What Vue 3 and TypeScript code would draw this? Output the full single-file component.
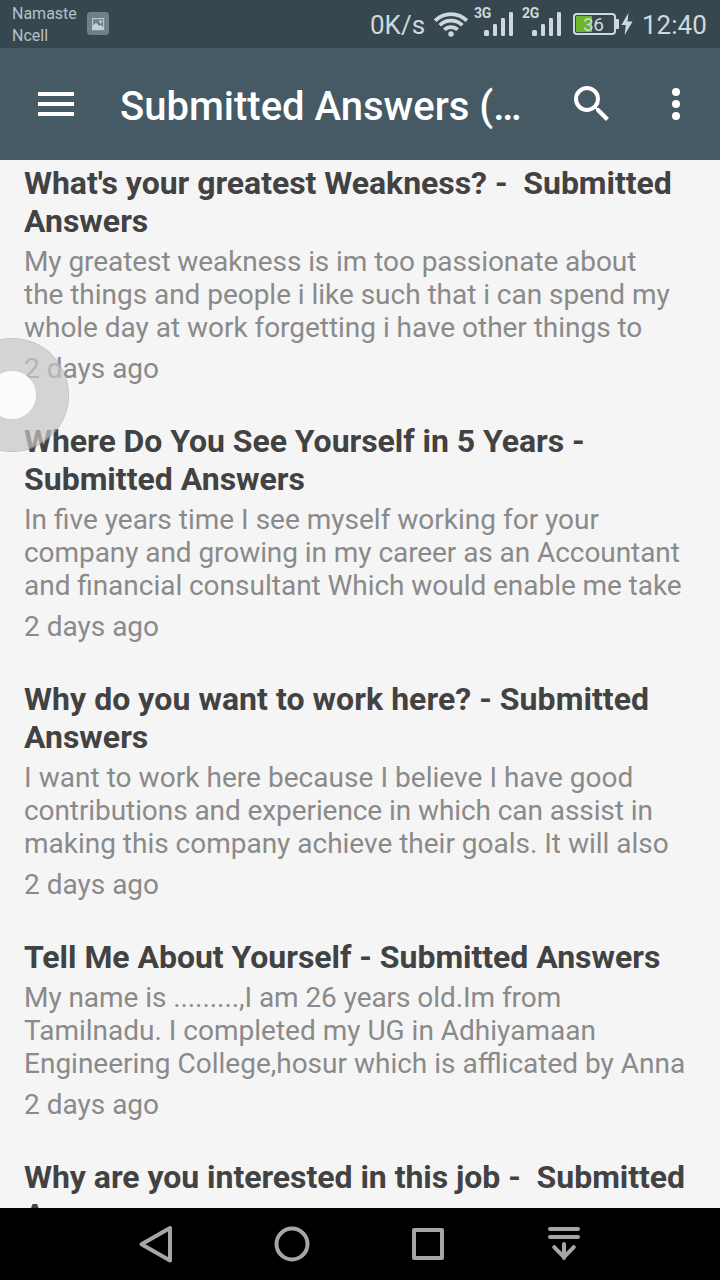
<script setup lang="ts">
interface Line { text: string; tracking?: number; wordGap?: number }
interface Answer { title: Line[]; body: Line[]; time?: string }

const answers: Answer[] = [
  {
    title: [{ text: "What's your greatest Weakness? -  Submitted", tracking: -0.035 }, { text: 'Answers' }],
    body: [
      { text: 'My greatest weakness is im too passionate about', tracking: -0.075 },
      { text: 'the things and people i like such that i can spend my', tracking: -0.035 },
      { text: 'whole day at work forgetting i have other things to', tracking: -0.03 },
    ],
    time: '2 days ago',
  },
  {
    title: [{ text: 'Where Do You See Yourself in 5 Years -', tracking: -0.045 }, { text: 'Submitted Answers' }],
    body: [
      { text: 'In five years time I see myself working for your' },
      { text: 'company and growing in my career as an Accountant', tracking: -0.065 },
      { text: 'and financial consultant Which would enable me take', wordGap: -0.3 },
    ],
    time: '2 days ago',
  },
  {
    title: [{ text: 'Why do you want to work here? - Submitted', tracking: 0.05 }, { text: 'Answers' }],
    body: [
      { text: 'I want to work here because I believe I have good', tracking: 0.04 },
      { text: 'contributions and experience in which can assist in', tracking: -0.08 },
      { text: 'making this company achieve their goals. It will also', tracking: -0.01 },
    ],
    time: '2 days ago',
  },
  {
    title: [{ text: 'Tell Me About Yourself - Submitted Answers', tracking: -0.035 }],
    body: [
      { text: 'My name is .........,I am 26 years old.Im from', tracking: -0.065 },
      { text: 'Tamilnadu. I completed my UG in Adhiyamaan' },
      { text: 'Engineering College,hosur which is afflicated by Anna' },
    ],
    time: '2 days ago',
  },
  {
    title: [{ text: 'Why are you interested in this job -  Submitted', tracking: -0.04 }, { text: 'Answers' }],
    body: [],
  },
]

const spacing = (l: Line) => ({
  letterSpacing: l.tracking ? `${l.tracking}px` : undefined,
  wordSpacing: l.wordGap ? `${l.wordGap}px` : undefined,
})
</script>

<template>
  <div class="screen">
    <header class="status">
      <div class="carrier"><span>Namaste</span><span>Ncell</span></div>
      <svg class="pic" width="22" height="23" viewBox="0 0 22 23">
        <rect width="22" height="23" rx="3.5" fill="#708087" />
        <path d="M5.6 6.6h11v11h-11z" fill="none" stroke="#b9c4c9" stroke-width="1.2" />
        <path d="M5.5 17.5v-3.6l3.6-3.2 3 3 1.5-.6 3 2.4v2z" fill="#c7d1d5" />
        <path d="M13.6 8v3.4M11.9 9.7h3.4" stroke="#c7d1d5" stroke-width="1.2" />
      </svg>
      <span class="speed">0K/s</span>
      <svg class="wifi" width="36" height="28" viewBox="433 10 36 28" fill="none" stroke="#cfd8dc" stroke-width="3.7">
        <path d="M435.1 20.6a22.6 22.6 0 0 1 31.8 0" />
        <path d="M439.7 25.3a16 16 0 0 1 22.6 0" />
        <path d="M444.4 29.8a9.4 9.4 0 0 1 13.2 0" />
        <circle cx="451" cy="34" r="2.7" fill="#cfd8dc" stroke="none" />
      </svg>
      <div v-for="net in ['3G', '2G']" :key="net" class="signal">
        <span>{{ net }}</span>
        <svg width="30" height="26" viewBox="0 0 30 26" fill="#cfd8dc">
          <rect x="0" y="19" width="5" height="6" rx="1.5" />
          <rect x="9" y="13" width="4" height="12" rx="1.2" />
          <rect x="17" y="7" width="4" height="18" rx="1.2" />
          <rect x="25" y="1" width="4" height="24" rx="1.2" />
        </svg>
      </div>
      <div class="battery"><i></i><b>36</b></div>
      <svg class="bolt" width="12" height="24" viewBox="0 0 12 24"><path d="M7.4 1L.4 13h4.4L3.6 23 11.6 9.6H6.6z" fill="#cfd8dc" /></svg>
      <span class="clock">12:40</span>
    </header>

    <div class="toolbar">
      <svg class="menu" width="36" height="24" viewBox="0 0 36 24" fill="#fff"><path d="M0 0h36v4H0zM0 10h36v4H0zM0 20h36v4H0z" /></svg>
      <h1>Submitted Answers (…</h1>
      <svg class="search" width="48" height="48" viewBox="0 0 24 24" fill="#fff">
        <path d="M15.5 14h-.79l-.28-.27A6.47 6.47 0 0 0 16 9.5 6.5 6.5 0 1 0 9.5 16c1.61 0 3.09-.59 4.23-1.57l.27.28v.79l5 4.99L20.49 19zm-6 0a4.5 4.5 0 1 1 0-9 4.5 4.5 0 0 1 0 9z" />
      </svg>
      <svg class="more" width="8" height="32" viewBox="0 0 8 32" fill="#fff"><circle cx="4" cy="4" r="4" /><circle cx="4" cy="16" r="4" /><circle cx="4" cy="28" r="4" /></svg>
    </div>

    <main class="list">
      <article v-for="(a, i) in answers" :key="i">
        <h2><span v-for="l in a.title" :key="l.text" :style="spacing(l)">{{ l.text }}</span></h2>
        <p v-if="a.body.length"><span v-for="l in a.body" :key="l.text" :style="spacing(l)">{{ l.text }}</span></p>
        <time v-if="a.time">{{ a.time }}</time>
      </article>
    </main>

    <nav class="nav">
      <svg width="40" height="40" viewBox="0 0 40 40"><path d="M5.5 20.3L34 4v32.5z" /></svg>
      <svg width="40" height="40" viewBox="0 0 40 40"><circle cx="20" cy="20" r="15.5" /></svg>
      <svg width="40" height="40" viewBox="0 0 40 40"><rect x="6" y="6" width="28" height="28" /></svg>
      <svg width="40" height="40" viewBox="0 0 40 40"><path d="M6 5h28M6 13h28M20 20v14M10.2 23.2L20 33.2l9.800-10" /></svg>
    </nav>

    <div class="bubble"></div>
  </div>
</template>

<style scoped>
.screen { position: relative; width: 720px; height: 1280px; overflow: hidden; display: flex; flex-direction: column; background: #f5f5f5; font-family: Roboto, sans-serif; }
.status { height: 48px; flex: none; display: flex; align-items: flex-start; background: #37474f; color: #cfd8dc; }
.carrier { width: 87px; flex: none; padding: 3px 0 0 12px; box-sizing: border-box; font-size: 16px; line-height: 22px; color: #b6c0c5; }
.carrier span { display: block; }
.pic { margin-top: 12px; flex: none; }
.speed { width: 63px; margin-left: 261px; flex: none; font-size: 26px; line-height: 50px; }
.wifi { flex: none; margin-top: 10px; }
.signal { position: relative; width: 30px; height: 26px; flex: none; margin: 11px 0 0 15px; }
.signal + .signal { margin-left: 18px; }
.signal svg { display: block; }
.signal span { position: absolute; left: -10px; top: -5px; font-size: 14px; line-height: 14px; font-weight: 700; letter-spacing: -0.4px; }
.battery { position: relative; width: 43px; height: 22px; box-sizing: border-box; flex: none; margin: 13px 0 0 11px; border: 2px solid #cfd8dc; border-radius: 4px; display: flex; }
.battery::after { content: ""; position: absolute; left: 41px; top: 4px; width: 3px; height: 10px; background: #cfd8dc; border-radius: 0 1px 1px 0; }
.battery i { width: 16px; height: 16px; margin: 1px; background: #6cb52d; }
.battery b { position: absolute; left: 8px; top: 0; font-weight: 400; font-size: 19px; line-height: 19px; letter-spacing: -0.5px; }
.bolt { flex: none; margin: 12px 0 0 5px; }
.clock { margin-left: 9px; font-size: 26px; line-height: 50px; }
.toolbar { height: 112px; flex: none; display: flex; align-items: flex-start; background: #455a64; color: #fff; padding-left: 38px; }
.menu { margin-top: 44px; flex: none; }
h1 { width: 448px; margin: 0 0 0 46px; flex: none; font-size: 40px; font-weight: 500; line-height: 117px; white-space: pre; }
.search { flex: none; margin-top: 32px; }
.more { flex: none; margin: 40px 0 0 56px; }
.list { flex: 1; min-height: 0; overflow: hidden; padding: 4px 24px 0; }
article { margin-bottom: 37px; }
h2 { margin: 0; font-size: 32px; line-height: 38px; font-weight: 700; color: #424242; }
p { margin: 5px 0 0; font-size: 28px; line-height: 33px; color: #8a8a8a; }
h2 span, p span { display: block; white-space: pre; }
time { display: block; margin-top: 8px; font-size: 28px; line-height: 33px; color: #8a8a8a; }
.nav { height: 72px; flex: none; display: flex; gap: 96px; padding: 16px 0 0 136px; box-sizing: border-box; background: #000; }
.nav svg { flex: none; fill: none; stroke: #a6a6a6; stroke-width: 4; stroke-linecap: round; stroke-linejoin: round; }
.bubble { position: absolute; left: -45px; top: 338px; width: 114px; height: 114px; box-sizing: border-box; border: 1px solid rgba(160, 160, 160, 0.6); border-radius: 50%; background: rgba(198, 198, 198, 0.7); background-clip: padding-box; }
.bubble::after { content: ""; position: absolute; left: 32px; top: 32px; width: 48px; height: 48px; border-radius: 50%; background: #fcfcfc; }
</style>
